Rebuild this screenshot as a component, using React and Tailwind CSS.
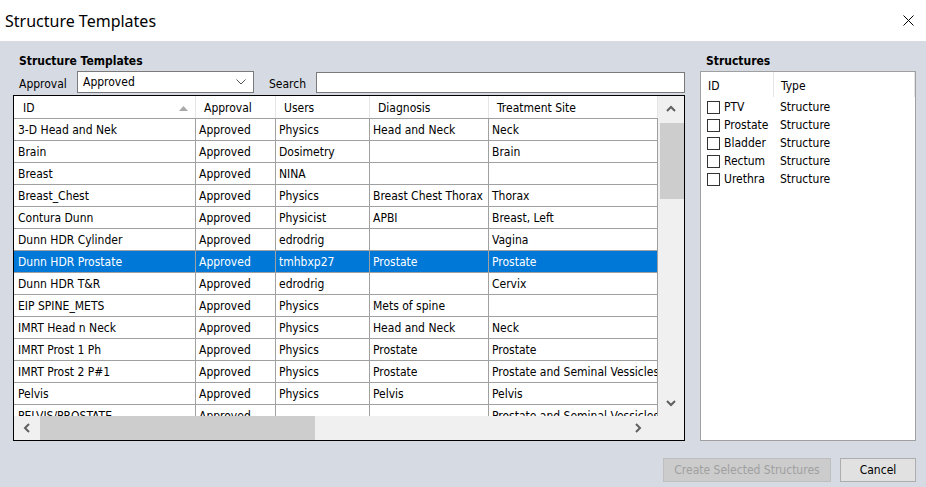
import React from "react";

const rows = [
  ["3-D Head and Nek", "Approved", "Physics", "Head and Neck", "Neck"],
  ["Brain", "Approved", "Dosimetry", "", "Brain"],
  ["Breast", "Approved", "NINA", "", ""],
  ["Breast_Chest", "Approved", "Physics", "Breast Chest Thorax", "Thorax"],
  ["Contura Dunn", "Approved", "Physicist", "APBI", "Breast, Left"],
  ["Dunn HDR Cylinder", "Approved", "edrodrig", "", "Vagina"],
  ["Dunn HDR Prostate", "Approved", "tmhbxp27", "Prostate", "Prostate"],
  ["Dunn HDR T&R", "Approved", "edrodrig", "", "Cervix"],
  ["EIP SPINE_METS", "Approved", "Physics", "Mets of spine", ""],
  ["IMRT Head n Neck", "Approved", "Physics", "Head and Neck", "Neck"],
  ["IMRT Prost 1 Ph", "Approved", "Physics", "Prostate", "Prostate"],
  ["IMRT Prost 2 P#1", "Approved", "Physics", "Prostate", "Prostate and Seminal Vessicles"],
  ["Pelvis", "Approved", "Physics", "Pelvis", "Pelvis"],
  ["PELVIS/PROSTATE", "Approved", "", "", "Prostate and Seminal Vessicles"],
];

const widths = ["w-[182px]", "w-[80px]", "w-[94px]", "w-[119px]", "w-[169px]"];
const headers = ["ID", "Approval", "Users", "Diagnosis", "Treatment Site"];
const structures = ["PTV", "Prostate", "Bladder", "Rectum", "Urethra"];

const Chevron = ({ dir }) => {
  const paths = {
    up: "M1 7 L5 3 L9 7",
    down: "M1 3 L5 7 L9 3",
    left: "M7 1 L3 5 L7 9",
    right: "M3 1 L7 5 L3 9",
  };
  return (
    <svg width="10" height="10" viewBox="0 0 10 10">
      <path d={paths[dir]} fill="none" stroke="#606060" strokeWidth="2" />
    </svg>
  );
};

export default function App() {
  const ui = { fontFamily: '"DejaVu Sans Condensed", "DejaVu Sans", sans-serif' };
  return (
    <div
      className="w-[926px] h-[487px] bg-[#d6dbe3] flex flex-col overflow-hidden text-black"
      style={ui}
    >
      {/* title bar */}
      <div className="h-[41px] bg-white flex items-center justify-between pl-[5px] pr-[12px] shrink-0">
        <span className="text-[16px] leading-none" style={{ fontFamily: '"Noto Sans", sans-serif' }}>
          Structure Templates
        </span>
        <svg width="11" height="11" viewBox="0 0 11 11">
          <path d="M0.5 0.5 L10.5 10.5 M10.5 0.5 L0.5 10.5" stroke="#000" strokeWidth="1" />
        </svg>
      </div>

      {/* main */}
      <div className="flex pt-[11px] pl-[13px] gap-[15px]">
        {/* left group */}
        <div className="flex flex-col w-[672px]">
          <div className="pl-[6px] text-[12px] font-bold leading-[16px] h-[16px] pt-[1px]">Structure Templates</div>
          <div className="flex items-center mt-[3px] h-[22px] pl-[6px] text-[12px]">
            <span className="w-[58px] pt-[3px]">Approval</span>
            <div className="w-[177px] h-[22px] bg-white border border-[#7a7a7a] flex items-center justify-between pl-[5px] pr-[7px]">
              <span className="leading-none -mt-[1px]">Approved</span>
              <svg width="10" height="6" viewBox="0 0 10 6">
                <path d="M0.5 0.5 L5 5 L9.5 0.5" fill="none" stroke="#555" strokeWidth="1" />
              </svg>
            </div>
            <span className="ml-[15px] w-[47px] pt-[3px]">Search</span>
            <div className="w-[369px] h-[21px] bg-white border border-[#7a7a7a]" />
          </div>

          {/* grid */}
          <div className="mt-[2px] h-[346px] border border-black bg-white flex flex-col text-[12px]">
            <div className="flex h-[320px]">
              <div className="w-[644px] overflow-hidden">
                {/* header */}
                <div className="flex h-[23px] border-b border-[#a0a0a0]">
                  {headers.map((h, i) => (
                    <div
                      key={h}
                      className={`${widths[i]} shrink-0 flex items-center pt-[2px] border-r border-[#e5e5e5] ${i === 0 ? "pl-[9px] pr-[7px] justify-between" : "pl-[8px]"}`}
                    >
                      <span>{h}</span>
                      {i === 0 && (
                        <svg width="9" height="5" viewBox="0 0 9 5">
                          <path d="M0 5 L4.5 0 L9 5 Z" fill="#a8a8a8" />
                        </svg>
                      )}
                    </div>
                  ))}
                </div>
                {rows.map((r, ri) => {
                  const sel = ri === 6;
                  return (
                    <div
                      key={ri}
                      className={`flex h-[22px] border-b border-[#a0a0a0] ${sel ? "bg-[#0078d7] text-white" : ""}`}
                    >
                      {r.map((c, ci) => (
                        <div
                          key={ci}
                          className={`${widths[ci]} shrink-0 flex items-center pt-[1px] overflow-hidden whitespace-nowrap border-r border-[#a0a0a0] ${ci === 0 ? "pl-[4px]" : "pl-[3px]"}`}
                        >
                          {c}
                        </div>
                      ))}
                    </div>
                  );
                })}
              </div>
              {/* vertical scrollbar */}
              <div className="w-[26px] bg-[#f0f0f0] flex flex-col items-center">
                <div className="h-[25px] flex items-center justify-center pt-[1px]">
                  <Chevron dir="up" />
                </div>
                <div className="w-[24px] h-[76px] ml-[1px] bg-[#cdcdcd] mt-[2px]" />
                <div className="flex-1" />
                <div className="h-[26px] flex items-center justify-center">
                  <Chevron dir="down" />
                </div>
              </div>
            </div>
            {/* horizontal scrollbar */}
            <div className="h-[24px] bg-[#f0f0f0] flex items-center">
              <div className="w-[26px] flex justify-center">
                <Chevron dir="left" />
              </div>
              <div className="w-[275px] h-[24px] bg-[#cdcdcd]" />
              <div className="flex-1" />
              <div className="w-[24px] flex justify-center mr-[34px]">
                <Chevron dir="right" />
              </div>
            </div>
          </div>
        </div>

        {/* right group */}
        <div className="flex flex-col w-[216px]">
          <div className="pl-[6px] text-[12px] font-bold leading-[16px] h-[16px] pt-[1px]">Structures</div>
          <div className="mt-[3px] h-[370px] bg-white border border-[#a0a0a0] text-[12px]">
            <div className="flex h-[25px] items-center">
              <div className="w-[73px] h-full flex items-center pl-[7px] pt-[2px] border-r border-[#e5e5e5]">ID</div>
              <div className="flex-1 h-full flex items-center pl-[7px] pt-[2px] border-r border-[#e5e5e5]">Type</div>
            </div>
            <div className="flex flex-col pt-[1px]">
              {structures.map((s) => (
                <div key={s} className="flex h-[18px] items-center">
                  <div className="w-[73px] flex items-center pl-[6px]">
                    <div className="w-[13px] h-[13px] border border-[#333] bg-white shrink-0" />
                    <span className="ml-[4px]">{s}</span>
                  </div>
                  <span className="pl-[6px]">Structure</span>
                </div>
              ))}
            </div>
          </div>
        </div>
      </div>

      {/* buttons */}
      <div className="flex justify-end gap-[9px] pr-[10px] mt-[17px] text-[12px]">
        <div className="w-[168px] h-[24px] bg-[#cccccc] border border-[#bfbfbf] text-[#a0a0a0] flex items-center justify-center">
          Create Selected Structures
        </div>
        <div className="w-[76px] h-[24px] bg-[#e1e1e1] border border-[#adadad] flex items-center justify-center">
          Cancel
        </div>
      </div>
    </div>
  );
}
